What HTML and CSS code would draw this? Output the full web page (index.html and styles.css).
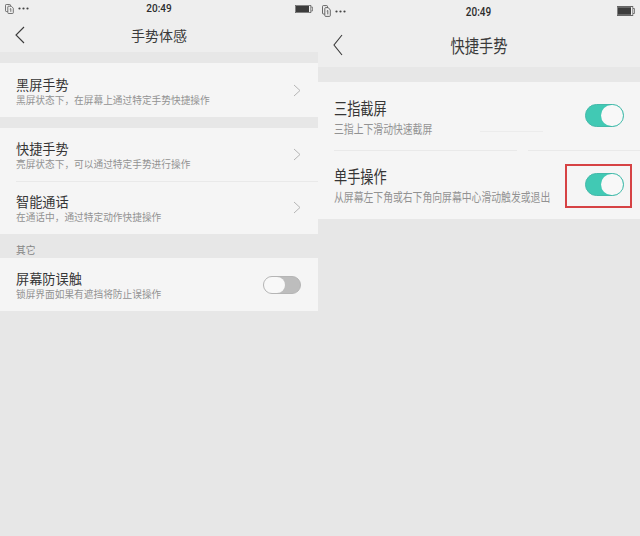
FILE: index.html
```html
<!DOCTYPE html>
<html lang="zh-CN">
<head>
<meta charset="utf-8">
<title>手势体感</title>
<link rel="stylesheet" href="styles.css">
</head>
<body>
<main class="screens">
  <section class="phone">
    <div class="status">
      <svg class="sim" viewBox="0 0 9 10"><path d="M2.6 7.5H1.3q-.8 0-.8-.8V1.3q0-.8.8-.8h3.4q.8 0 .8.8v.9M2.8 3q0-.8.8-.8h2.7l2 2v4.5q0 .8-.8.8H3.6q-.8 0-.8-.8zM4.8 5.1l1-.5v3.2"/></svg>
      <svg class="dots" viewBox="0 0 11 3"><circle cx="1.5" cy="1.5" r="1.1"/><circle cx="5.5" cy="1.5" r="1.1"/><circle cx="9.5" cy="1.5" r="1.1"/></svg>
      <span class="clock">20:49</span>
      <svg class="battery" viewBox="0 0 18 8"><rect class="shell" x=".4" y=".4" width="15.4" height="7.2"/><rect class="charge" x="1" y="1" width="13" height="6"/><path class="shell" d="M16 2h1.4v4H16"/></svg>
    </div>
    <header class="nav">
      <svg class="back" viewBox="0 0 10 18"><path d="M9 1L1 9l8 8"/></svg>
      <h1>手势体感</h1>
    </header>
    <div class="list first">
      <div class="row"><div class="label"><h2>黑屏手势</h2><p>黑屏状态下，在屏幕上通过特定手势快捷操作</p></div><svg class="arrow" viewBox="0 0 8 13"><path d="M1 1l6 5.5L1 12"/></svg></div>
    </div>
    <div class="list second">
      <div class="row"><div class="label"><h2>快捷手势</h2><p>亮屏状态下，可以通过特定手势进行操作</p></div><svg class="arrow" viewBox="0 0 8 13"><path d="M1 1l6 5.5L1 12"/></svg></div>
      <div class="row"><div class="label"><h2>智能通话</h2><p>在通话中，通过特定动作快捷操作</p></div><svg class="arrow" viewBox="0 0 8 13"><path d="M1 1l6 5.5L1 12"/></svg></div>
    </div>
    <div class="group">其它</div>
    <div class="list">
      <div class="row"><div class="label"><h2>屏幕防误触</h2><p>锁屏界面如果有遮挡将防止误操作</p></div><span class="switch"></span></div>
    </div>
  </section>

  <section class="phone tall">
    <div class="status">
      <svg class="sim" viewBox="0 0 9 10" preserveAspectRatio="none"><path d="M2.6 7.5H1.3q-.8 0-.8-.8V1.3q0-.8.8-.8h3.4q.8 0 .8.8v.9M2.8 3q0-.8.8-.8h2.7l2 2v4.5q0 .8-.8.8H3.6q-.8 0-.8-.8zM4.8 5.1l1-.5v3.2"/></svg>
      <svg class="dots" viewBox="0 0 11 3"><circle cx="1.5" cy="1.5" r="1.1"/><circle cx="5.5" cy="1.5" r="1.1"/><circle cx="9.5" cy="1.5" r="1.1"/></svg>
      <span class="clock">20:49</span>
      <svg class="battery" viewBox="0 0 18 8" preserveAspectRatio="none"><rect class="shell" x=".4" y=".4" width="15.4" height="7.2"/><rect class="charge" x="1" y="1" width="13" height="6"/><path class="shell" d="M16 2h1.4v4H16"/></svg>
    </div>
    <header class="nav">
      <svg class="back" viewBox="0 0 10 22"><path d="M9 1L1 11l8 10"/></svg>
      <h1>快捷手势</h1>
    </header>
    <div class="list">
      <div class="row"><div class="label"><h2>三指截屏</h2><p>三指上下滑动快速截屏</p></div><span class="switch on"></span></div>
      <div class="row"><div class="label"><h2>单手操作</h2><p>从屏幕左下角或右下角向屏幕中心滑动触发或退出</p></div><span class="highlight"><span class="switch on"></span></span></div>
    </div>
  </section>
</main>
</body>
</html>
```
FILE: styles.css
```css
* { box-sizing: border-box; }
body {
  margin: 0;
  background: #e7e7e7;
  color: #3a3a3a;
  font-family: "Noto Sans CJK SC", sans-serif;
}
h1, h2, p { margin: 0; font-weight: 400; white-space: nowrap; }
svg { display: block; fill: none; flex: none; }
.screens { display: grid; grid-template-columns: 318px 322px; height: 536px; overflow: hidden; }

.status {
  display: grid;
  grid-template-columns: 9px 11px 1fr 18px;
  column-gap: 4px;
  align-items: center;
  height: 17px;
  padding: 0 5px;
  background: #eee;
}
.sim { width: 9px; height: 10px; stroke: #555; stroke-width: .8; }
.dots { width: 11px; height: 3px; fill: #444; }
.clock {
  justify-self: center;
  padding-right: 6px;
  font: 500 10px/17px Roboto, sans-serif;
  color: #2c2c2c;
}
.battery { width: 18px; height: 8px; }
.shell { stroke: #666; stroke-width: .8; }
.charge { fill: #3c3c3c; }

.nav {
  display: grid;
  grid-template-columns: 10px 1fr 10px;
  align-items: center;
  height: 35px;
  padding: 0 15px;
  background: #eee;
}
.back { width: 10px; height: 18px; stroke: #3a3a3a; stroke-width: 1.1; }
.nav h1 { font-size: 14px; line-height: 20px; text-align: center; }

.list { background: #f5f5f5; }
.nav + .list { margin-top: 11px; }
.second { margin-top: 11px; }
.row {
  display: flex;
  align-items: center;
  justify-content: space-between;
  position: relative;
  height: 53px;
  padding: 0 17px 0 16px;
}
.first .row { height: 54px; }
.row + .row::before {
  content: "";
  position: absolute;
  inset: 0 0 auto 16px;
  height: 1px;
  background: #e9e9e9;
}
.label { display: grid; grid-template-rows: 17px 15px; padding-top: 3px; }
.label h2 { font-size: 13.2px; line-height: 17px; color: #363636; }
.label p { font-size: 9.7px; line-height: 15px; color: #929292; }
.arrow { width: 8px; height: 13px; stroke: #b5b5b5; stroke-width: 1; }
.group { height: 24px; padding-left: 16px; font-size: 9.7px; line-height: 32px; color: #858585; }

.switch {
  display: flex;
  width: 38px;
  height: 18px;
  border: 1px solid #b5b5b5;
  border-radius: 9px;
  background: #bdbdbd;
}
.switch::before {
  content: "";
  width: 21px;
  border-radius: 10px;
  background: #f8f8f8;
}

.tall .status { height: 22px; padding: 0 5px 0 4px; }
.tall .sim { height: 12px; }
.tall .battery { height: 10px; }
.tall .clock, .tall h1, .tall h2, .tall p { transform: scaleY(1.27); }
.tall .nav { height: 45px; }
.tall .back { height: 22px; }
.tall .nav h1 { font-size: 14.3px; }
.tall .nav + .list { margin-top: 15px; }
.tall .row { height: 68px; padding: 0 16px; }
.tall .row + .row { height: 69px; padding-right: 8px; }
.tall .label { grid-template-rows: 21px 20px; padding-top: 4px; }
.tall .label h2 { line-height: 21px; }
.tall .label p { font-size: 9.84px; line-height: 20px; }
.tall .row + .row::before {
  background: linear-gradient(90deg, #e9e9e9 183px, transparent 183px 194px, #e9e9e9 194px);
}
.tall .row:first-child::after {
  content: "";
  position: absolute;
  top: 49px;
  left: 162px;
  width: 63px;
  height: 1px;
  background: #ececec;
}
.on {
  justify-content: flex-end;
  width: 39px;
  height: 23px;
  margin-top: -2px;
  border-color: #45b9aa;
  border-radius: 12px;
  background: #41c9b4;
}
.on::before { width: 22px; border-radius: 11px; }
.highlight {
  display: flex;
  align-items: center;
  justify-content: flex-end;
  width: 67px;
  height: 44px;
  margin-top: 2px;
  padding-right: 6px;
  border: 2px solid #d64244;
}
.highlight .switch { margin-top: -3px; }
```
